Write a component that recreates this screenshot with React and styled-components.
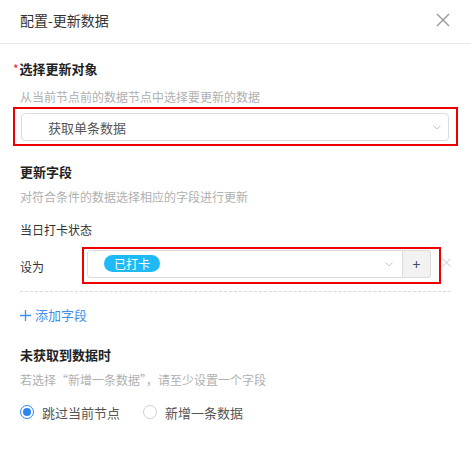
import React from "react";
import styled, { createGlobalStyle } from "styled-components";

const GlobalStyle = createGlobalStyle`
  body {
    margin: 0;
    background: #fff;
    font-family: "Noto Sans CJK SC", "Liberation Sans", sans-serif;
    color: #333;
  }
`;

const Panel = styled.div`
  width: 471px;
  height: 470px;
  background: #fff;
`;

const Header = styled.div`
  height: 44px;
  box-sizing: border-box;
  padding: 0 21px 4px 20px;
  display: flex;
  align-items: center;
  justify-content: space-between;
  border-bottom: 1px solid #e8e8e8;
`;

const Title = styled.div`
  font-size: 14px;
  line-height: 20px;
  color: #333;
`;

const Body = styled.div`
  padding: 15px 20px 0 20px;
`;

const Label = styled.div`
  font-size: 13px;
  line-height: 20px;
  font-weight: 700;
  color: #222;
  margin-top: ${(p) => p.$mt || 0}px;
`;

const Star = styled.span`
  color: #f5222d;
  font-weight: 400;
  font-size: 12px;
  margin-left: -7px;
  margin-right: 1px;
  vertical-align: 0;
`;

const Desc = styled.div`
  font-size: 12px;
  line-height: 20px;
  color: #b0b0b0;
  margin-top: ${(p) => p.$mt || 0}px;
`;

const FieldName = styled.div`
  font-size: 12px;
  line-height: 20px;
  color: #333;
  margin-top: 13px;
`;

const Highlight = styled.div`
  border: 2px solid #ee0000;
  display: flex;
  align-items: center;
`;

const TargetBox = styled(Highlight)`
  margin: 0 -7px 0 -7px;
  padding: 4px 7px 3px 6px;
`;

const Select = styled.div`
  flex: 1;
  height: 28px;
  box-sizing: border-box;
  border: 1px solid #dcdcdc;
  border-radius: ${(p) => (p.$joined ? "3px 0 0 3px" : "4px")};
  display: flex;
  align-items: center;
  padding: ${(p) => p.$pad || "0 7px 0 26px"};
  font-size: 13px;
  color: #555;
`;

const SelectText = styled.span`
  flex: 1;
`;

const Row = styled.div`
  display: flex;
  align-items: center;
  margin-top: 7px;
`;

const RowLabel = styled.div`
  width: 62px;
  font-size: 12px;
  color: #333;
  padding-top: 2px;
`;

const ValueBox = styled(Highlight)`
  width: 359px;
  box-sizing: border-box;
  padding: 1px 8px 4px 3px;
`;

const Tag = styled.span`
  height: 20px;
  line-height: 20px;
  padding: 0 10px;
  border-radius: 10px;
  background: #1fb9f6;
  color: #fff;
  font-size: 12px;
  margin-top: -1px;
`;

const AddButton = styled.div`
  width: 28px;
  height: 28px;
  box-sizing: border-box;
  border: 1px solid #dcdcdc;
  border-left: none;
  border-radius: 0 3px 3px 0;
  background: #f2f2f2;
  display: flex;
  align-items: center;
  justify-content: center;
  color: #3d4b66;
  font-size: 14px;
`;

const Dashed = styled.div`
  border-top: 1px dashed #d9d9d9;
  margin-top: 7px;
`;

const AddField = styled.div`
  margin-top: 13px;
  display: flex;
  align-items: center;
  gap: 4px;
  font-size: 13px;
  line-height: 20px;
  color: #3f8fe8;
`;

const RadioGroup = styled.div`
  display: flex;
  align-items: center;
  margin-top: 12px;
  gap: 23px;
  height: 20px;
`;

const RadioItem = styled.label`
  display: flex;
  align-items: center;
  gap: 8px;
  font-size: 13px;
  color: #555;
`;

const RadioDot = styled.span`
  width: 14px;
  height: 14px;
  box-sizing: border-box;
  border-radius: 50%;
  border: 1px solid ${(p) => (p.$on ? "#2b85f0" : "#d0d0d0")};
  display: flex;
  align-items: center;
  justify-content: center;
  &::after {
    content: "";
    width: 8px;
    height: 8px;
    border-radius: 50%;
    background: ${(p) => (p.$on ? "#2b85f0" : "transparent")};
  }
`;

const Chevron = () => (
  <svg width="8" height="5" viewBox="0 0 8 5">
    <path d="M0.5 0.5 L4 4 L7.5 0.5" fill="none" stroke="#c8c8c8" strokeWidth="1" />
  </svg>
);

const Cross = ({ size, color, width }) => (
  <svg width={size} height={size} viewBox="0 0 14 14">
    <path d="M1 1 L13 13 M13 1 L1 13" stroke={color} strokeWidth={width} />
  </svg>
);

const RemoveIcon = styled.span`
  display: flex;
  margin-left: 1px;
  margin-top: -6px;
`;

export default function App() {
  return (
    <>
      <GlobalStyle />
      <Panel>
        <Header>
          <Title>配置-更新数据</Title>
          <Cross size={14} color="#999" width={1.4} />
        </Header>
        <Body>
          <Label>
            <Star>*</Star>选择更新对象
          </Label>
          <Desc $mt={8}>从当前节点前的数据节点中选择要更新的数据</Desc>
          <TargetBox>
            <Select>
              <SelectText>获取单条数据</SelectText>
              <Chevron />
            </Select>
          </TargetBox>

          <Label $mt={16}>更新字段</Label>
          <Desc $mt={5}>对符合条件的数据选择相应的字段进行更新</Desc>
          <FieldName>当日打卡状态</FieldName>
          <Row>
            <RowLabel>设为</RowLabel>
            <ValueBox>
              <Select $joined $pad="0 9px 0 16px">
                <SelectText>
                  <Tag>已打卡</Tag>
                </SelectText>
                <Chevron />
              </Select>
              <AddButton>+</AddButton>
            </ValueBox>
            <RemoveIcon>
              <Cross size={9} color="#d6d6d6" width={1.6} />
            </RemoveIcon>
          </Row>
          <Dashed />
          <AddField>
            <svg width="11" height="11" viewBox="0 0 11 11">
              <path d="M5.5 0 V11 M0 5.5 H11" stroke="#3f8fe8" strokeWidth="1.3" />
            </svg>
            添加字段
          </AddField>

          <Label $mt={20}>未获取到数据时</Label>
          <Desc $mt={5}>若选择“新增一条数据”，请至少设置一个字段</Desc>
          <RadioGroup>
            <RadioItem>
              <RadioDot $on />
              跳过当前节点
            </RadioItem>
            <RadioItem>
              <RadioDot />
              新增一条数据
            </RadioItem>
          </RadioGroup>
        </Body>
      </Panel>
    </>
  );
}
